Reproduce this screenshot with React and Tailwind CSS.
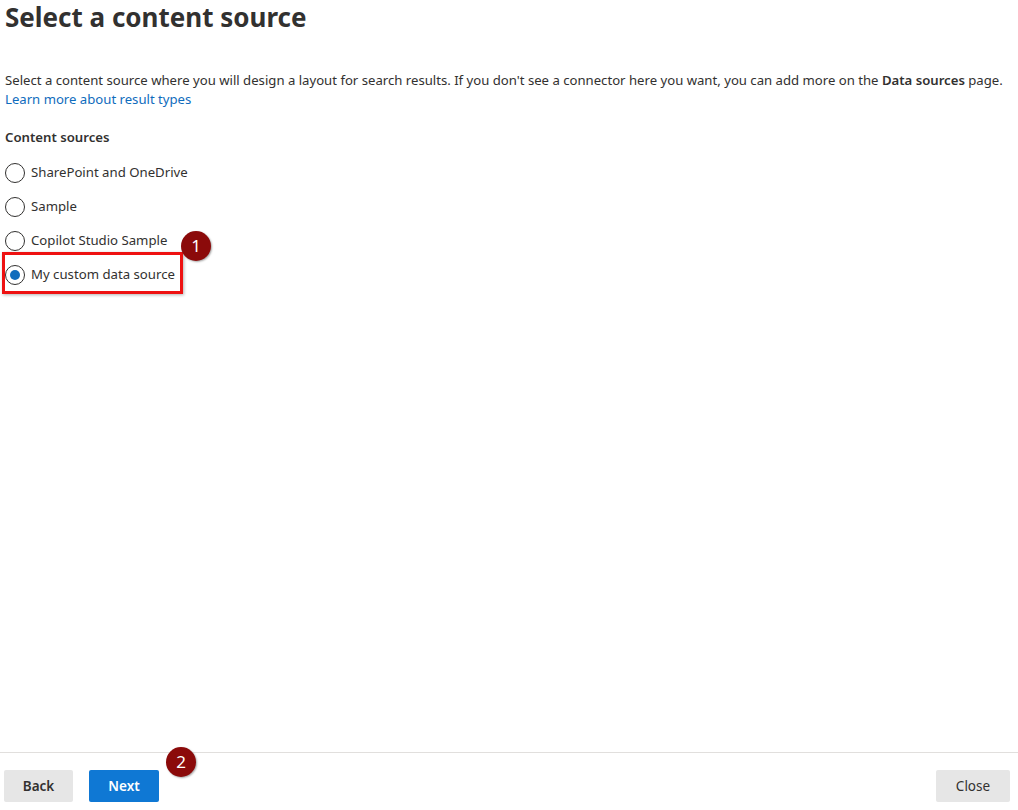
import React from 'react';

const sources = [
  { id: 'sp', label: 'SharePoint and OneDrive' },
  { id: 'sample', label: 'Sample' },
  { id: 'copilot', label: 'Copilot Studio Sample' },
  { id: 'custom', label: 'My custom data source' },
];

const Badge = ({ n, className }) => (
  <span
    className={`absolute z-10 flex h-[30px] w-[30px] items-center justify-center rounded-full bg-[#8b0a0a] text-[17px] text-white shadow-[1px_1px_2px_rgba(0,0,0,0.35)] ${className}`}
  >
    {n}
  </span>
);

const Radio = ({ checked }) => (
  <span className="flex h-5 w-5 shrink-0 items-center justify-center rounded-full border border-[#323130] bg-white">
    {checked && <span className="h-[10px] w-[10px] rounded-full bg-[#0f6cbd]" />}
  </span>
);

export default function App() {
  const selected = 'custom';

  return (
    <div className="flex h-[810px] w-full flex-col bg-white font-['Noto_Sans',sans-serif] text-[#323130]">
      <div className="flex-1 px-[5px]">
        <h1 className="text-[26px] font-bold leading-[34px] text-[#323130]">Select a content source</h1>

        <p className="mt-[37px] text-[13.15px] leading-[19px]">
          Select a content source where you will design a layout for search results. If you don't see a connector here you want, you can add more on the <b className="font-semibold">Data sources</b> page.
          <br />
          <a href="#" className="text-[#0f6cbd]">Learn more about result types</a>
        </p>

        <div className="mt-[18px] text-[13.2px] font-semibold leading-[20px]">Content sources</div>

        <div className="mt-[9px] flex flex-col">
          {sources.map((s) => (
            <div key={s.id} className="relative flex h-[34px] items-center">
              {s.id === selected && (
                <span className="pointer-events-none absolute left-[-3px] top-[-6px] h-[42px] w-[181px] border-[3px] border-[#ee1111] shadow-[1px_1px_3px_rgba(0,0,0,0.3)]" />
              )}
              {s.id === 'copilot' && <Badge n="1" className="left-[176px] top-[7px]" />}
              <Radio checked={s.id === selected} />
              <span className="ml-[6px] text-[13.2px]">{s.label}</span>
            </div>
          ))}
        </div>
      </div>

      <div className="relative flex items-center border-t border-[#e1dfdd] px-[4px] pt-[17px] pb-[8px]">
        <Badge n="2" className="left-[166px] top-[-6px]" />
        <button className="h-[32px] w-[69px] rounded-[2px] bg-[#e6e6e6] text-[13.5px] font-semibold text-[#323130]">Back</button>
        <button className="ml-[16px] h-[32px] w-[70px] rounded-[2px] bg-[#0f78d4] text-[13.5px] font-semibold text-white">Next</button>
        <button className="ml-auto mr-[4px] h-[32px] w-[74px] rounded-[2px] bg-[#e6e6e6] text-[13.5px] text-[#323130]">Close</button>
      </div>
    </div>
  );
}
